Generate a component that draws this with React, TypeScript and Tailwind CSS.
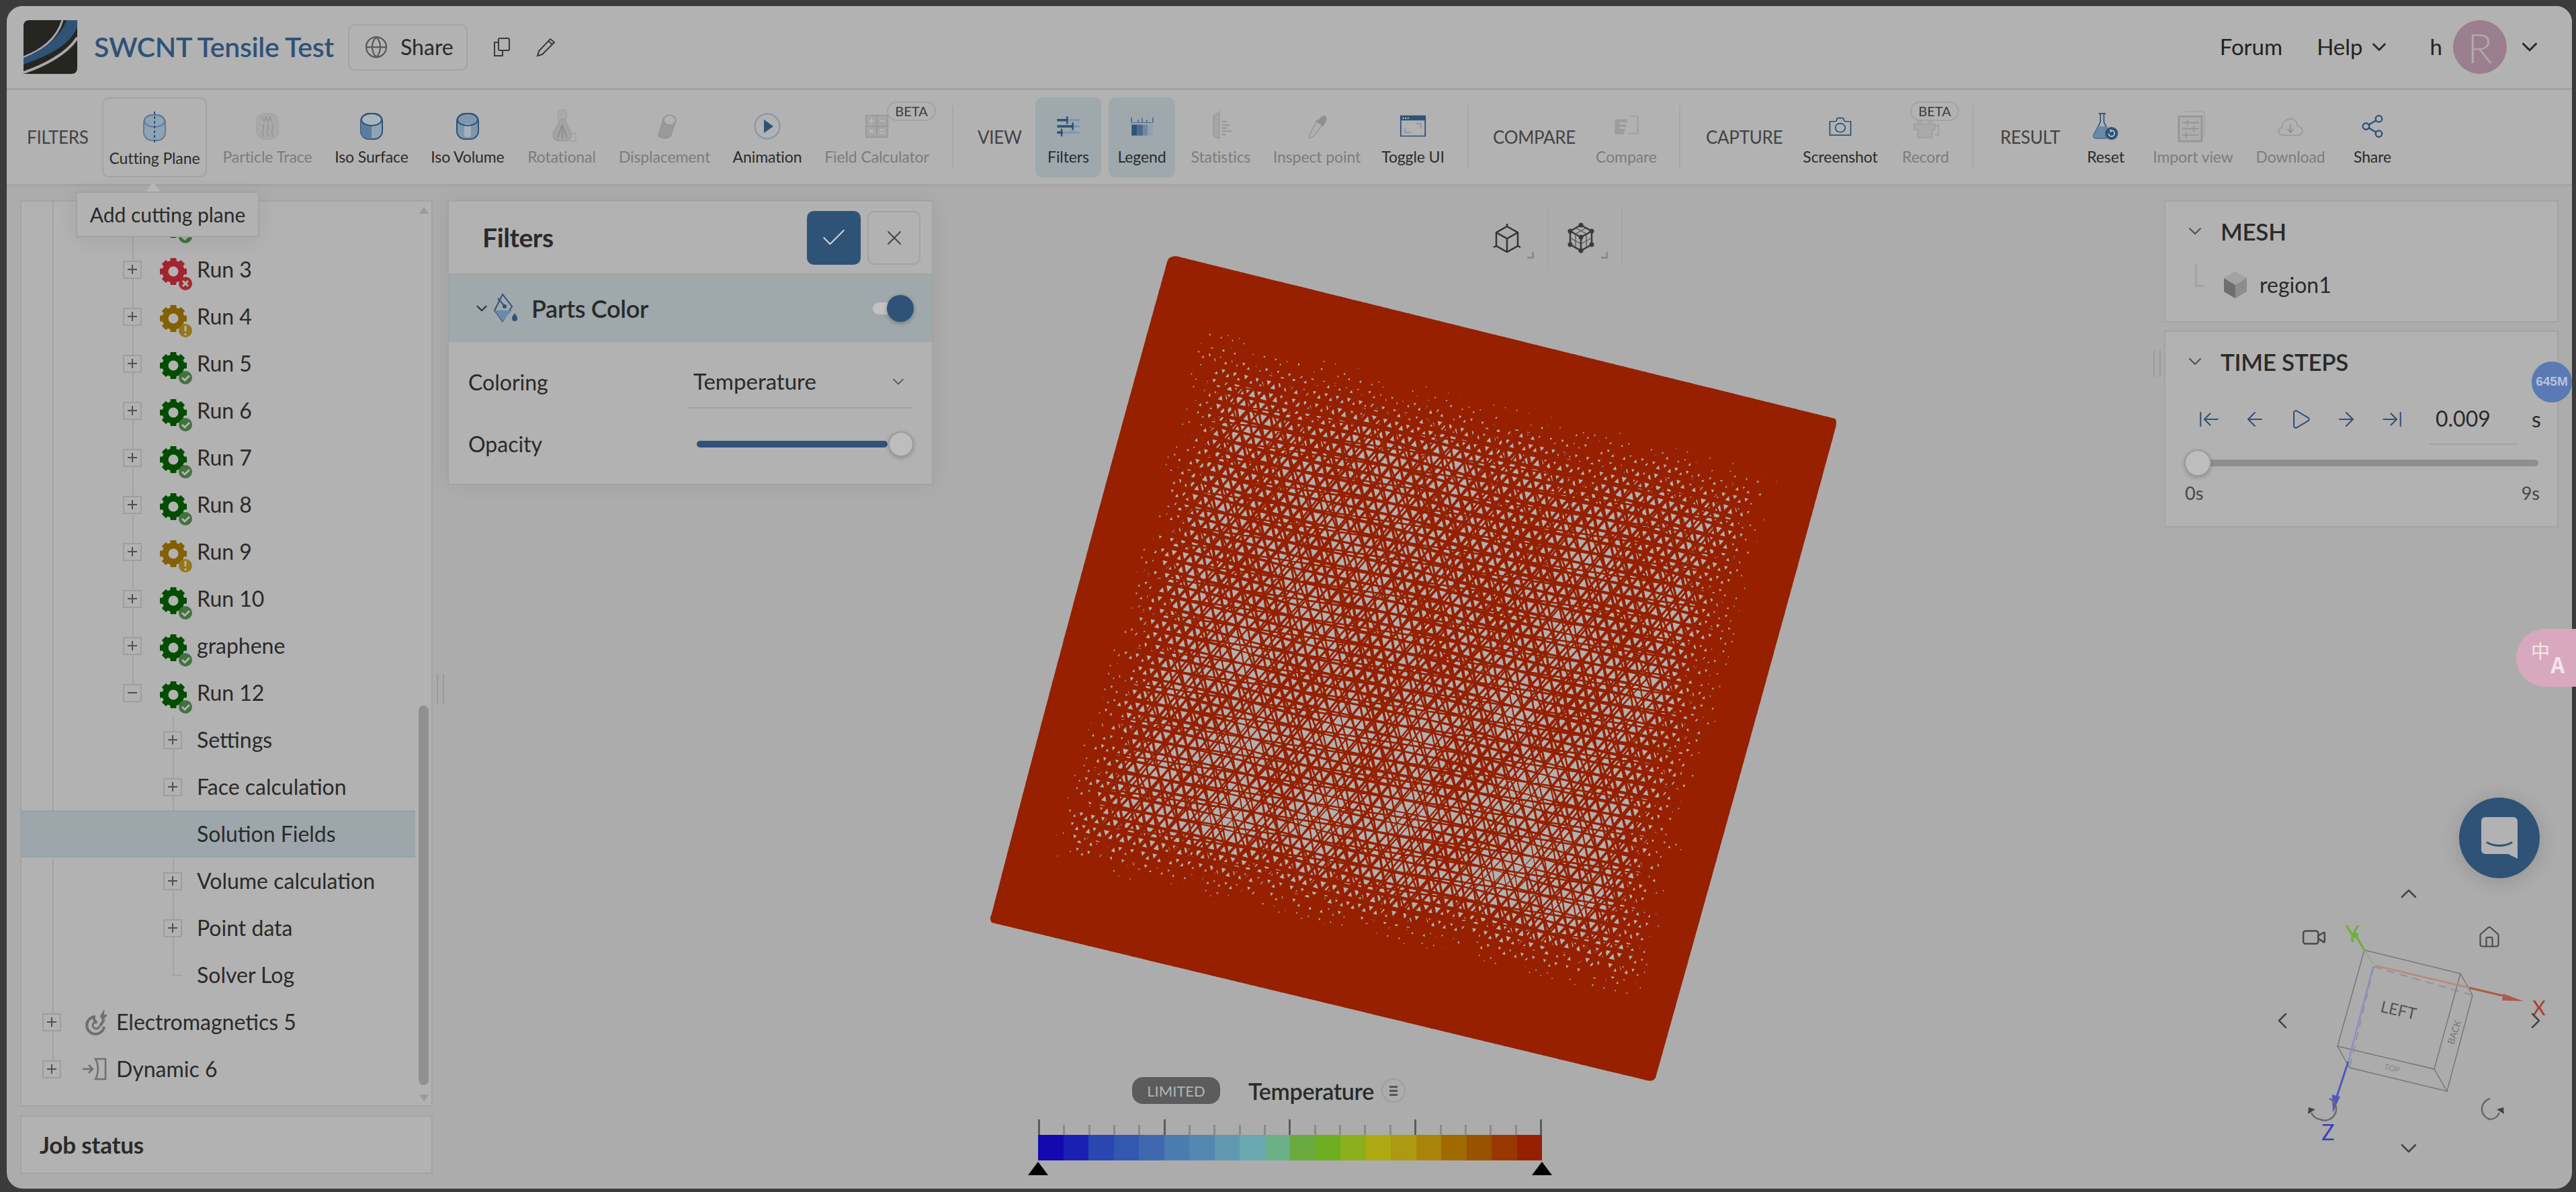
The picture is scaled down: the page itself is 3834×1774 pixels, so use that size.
import { useMemo } from "react"
import { ArrowLeft, ArrowLeftToLine, ArrowRight, ArrowRightToLine, Check, ChevronDown, ChevronLeft, ChevronRight, ChevronUp, Globe, House, Play, Share2, Video, X } from "lucide-react"

const B = "#2f5277"
const L = "#7e97ad"

// toolbar icons, drawn in their own box and stretched to the size the toolbar wants
function Cylinder({ fill, stroke, dashed, half, core }: { fill: string; stroke: string; dashed?: boolean; half?: boolean; core?: boolean }) {
  return (
    <svg width="48" height="48" viewBox="0 0 48 48" fill="none">
      <rect x="8" y="5" width="32" height="38" rx="12" fill={fill} stroke={stroke} strokeWidth="2" />
      {half && <path d="M8 15v16c0 8 6 12 16 12V15z" fill="#5b7c9c" />}
      {core && <rect x="19" y="20" width="10" height="20" rx="4" fill="#a4b1bb" />}
      <ellipse cx="24" cy="14" rx="15" ry="9" fill={half ? "#a9b5bf" : "none"} stroke={stroke} strokeWidth="2" />
      {dashed && <path d="M24 0v48" stroke={B} strokeWidth="2" strokeDasharray="4 3" />}
    </svg>
  )
}

function ParticleIcon() {
  return (
    <svg width="34" height="40" viewBox="0 0 34 40" fill="none">
      <rect x="1" y="1" width="32" height="38" rx="12" fill="#a9a9a9" stroke="#a3a3a3" strokeWidth="1.5" />
      <path d="M9 6l3 7 3-7 3 7 3-7 3 7M10 17c4 6-3 8 1 18M17 17c4 6-3 8 1 18M24 17c4 6-3 8 1 18" stroke="#939393" strokeWidth="1.5" />
    </svg>
  )
}

function RotationalIcon() {
  return (
    <svg width="52" height="49" viewBox="0 0 62 52" preserveAspectRatio="none" fill="none">
      <rect x="24" y="0" width="16" height="18" rx="8" fill="#aaaaaa" stroke="#a2a2a2" strokeWidth="2" />
      <path d="M28 16h8l12 22v4a16 8 0 0 1-32 0v-4z" fill="#a4a4a4" stroke="#9c9c9c" strokeWidth="2" />
      <path d="M32 24l-8 20M32 24v22M32 24l8 20" stroke="#8c8c8c" strokeWidth="2" />
      <path d="M50 38h6v12H22" stroke="#a4a4a4" strokeWidth="2" />
    </svg>
  )
}

function DisplacementIcon() {
  return (
    <svg width="43" height="40" viewBox="0 0 48 48" preserveAspectRatio="none" fill="none">
      <path d="M14 38L22 10c2-7 20-5 20 5L34 40c-2 8-22 6-20-2z" fill="#9a9a9a" stroke="#949494" strokeWidth="2" />
      <ellipse cx="32" cy="13" rx="10" ry="9" fill="#b2b2b2" stroke="#949494" strokeWidth="2" />
    </svg>
  )
}

function AnimationIcon() {
  return (
    <svg width="40" height="40" viewBox="0 0 40 40" fill="none">
      <circle cx="20" cy="20" r="18.5" stroke={L} strokeWidth="2" />
      <path d="M15 10l14 10-14 10z" fill={B} />
    </svg>
  )
}

function CalcIcon() {
  return (
    <svg width="36" height="36" viewBox="0 0 40 40" fill="none" stroke="#9a9a9a" strokeWidth="2">
      <rect x="2" y="2" width="36" height="36" fill="#a6a6a6" />
      <path d="M20 2v36M2 20h36" />
      <path d="M7 11h8M11 7v8M25 11h8M8 25l6 6M14 25l-6 6M25 26h8M25 31h8" stroke="#bbbbbb" />
    </svg>
  )
}

function FiltersIcon() {
  return (
    <svg width="40" height="34" viewBox="0 0 48 48" preserveAspectRatio="none" fill="none">
      <path d="M4 11h40" stroke={L} strokeWidth="5" /><path d="M4 11h18" stroke={B} strokeWidth="5" /><path d="M22 3v16" stroke={B} strokeWidth="3" />
      <path d="M4 24h40" stroke={L} strokeWidth="5" /><path d="M4 24h28" stroke={B} strokeWidth="5" /><path d="M32 16v16" stroke={B} strokeWidth="3" />
      <path d="M4 37h40" stroke={L} strokeWidth="5" /><path d="M4 37h10" stroke={B} strokeWidth="5" /><path d="M12 29v16" stroke={B} strokeWidth="3" />
    </svg>
  )
}

function LegendIcon() {
  return (
    <svg width="40" height="30" viewBox="0 0 48 48" preserveAspectRatio="none" fill="none">
      <path d="M5 3v11M17 8v6M24 4v10M32 8v6M43 3v11M4 15h40" stroke={B} strokeWidth="1.5" />
      <rect x="5" y="20" width="10" height="26" fill={B} />
      <rect x="15" y="20" width="10" height="26" fill="#49698a" />
      <rect x="25" y="20" width="9" height="26" fill="#6d889f" />
      <rect x="34" y="20" width="9" height="26" fill="#8ea1af" />
    </svg>
  )
}

function StatisticsIcon() {
  return (
    <svg width="40" height="46" viewBox="0 0 54 52" preserveAspectRatio="none" fill="none">
      <path d="M24 4C12 4 12 10 12 14v24c0 4 2 8 12 8z" fill="#a5a5a5" stroke="#9c9c9c" strokeWidth="2" />
      <path d="M24 0v52" stroke="#9c9c9c" strokeWidth="2" strokeDasharray="4 3" />
      <path d="M29 18h10M29 24h16M29 29h10M29 34h20M29 40h8" stroke="#9c9c9c" strokeWidth="3" />
    </svg>
  )
}

function DropperIcon() {
  return (
    <svg width="38" height="38" viewBox="0 0 48 48" fill="none">
      <path d="M24 14l10 8-17 22-7 2 1-8z" fill="#b0b0b0" stroke="#9a9a9a" strokeWidth="2" />
      <path d="M22 14l14 10 3-6c6-7 3-16-3-14-3 1-5 3-7 6z" fill="#8f8f8f" />
    </svg>
  )
}

function ToggleIcon() {
  return (
    <svg width="40" height="33" viewBox="0 0 44 44" preserveAspectRatio="none" fill="none">
      <rect x="2" y="2" width="40" height="40" stroke={B} strokeWidth="2" />
      <rect x="2" y="2" width="40" height="9" fill={B} />
      <path d="M6 5v3M10 5v3M14 5v3" stroke="#c8c8c8" strokeWidth="2" />
      <path d="M26 17h9v10M9 26v9h10" stroke={L} strokeWidth="2" />
    </svg>
  )
}

function CompareIcon() {
  return (
    <svg width="41" height="36" viewBox="0 0 48 48" preserveAspectRatio="none" fill="none">
      <path d="M4 10h22l-6 30H4z" fill="#9c9c9c" />
      <path d="M30 4h14v34H28" stroke="#9c9c9c" strokeWidth="2" />
      <path d="M12 18h12M12 27h10" stroke="#b8b8b8" strokeWidth="3" />
    </svg>
  )
}

function CameraIcon() {
  return (
    <svg width="36" height="32" viewBox="0 0 44 44" preserveAspectRatio="none" fill="none" stroke={B} strokeWidth="2.2">
      <path d="M3 12h11l3-7h10l3 7h11v28H3z" strokeLinejoin="round" />
      <circle cx="22" cy="25" r="9" />
    </svg>
  )
}

function RecordIcon() {
  return (
    <svg width="42" height="40" viewBox="0 0 44 48" preserveAspectRatio="none" fill="none" stroke="#9e9e9e" strokeWidth="2">
      <circle cx="13" cy="10" r="6" /><circle cx="29" cy="10" r="6" />
      <path d="M4 20h32v10h-4v14H10V30H4z" fill="#aaaaaa" />
      <path d="M36 24l6-2v18l-6-2" />
    </svg>
  )
}

function ResetIcon() {
  return (
    <svg width="42" height="42" viewBox="0 0 48 48" fill="none">
      <path d="M12 2h12M15 2v15L4 38c-2 4 0 6 4 6h18" stroke={B} strokeWidth="2" />
      <path d="M21 2v15l6 12" stroke={B} strokeWidth="2" />
      <path d="M11 24h16l4 14-5 6H8c-4 0-6-2-4-6z" fill="#6a8aa8" />
      <circle cx="34" cy="36" r="11" fill={B} />
      <path d="M34 31a5 5 0 1 1-5 5M31 30l3 1-2 3" stroke="#c0c8d0" strokeWidth="2" />
    </svg>
  )
}

function ImportIcon() {
  return (
    <svg width="48" height="48" viewBox="0 0 52 52" fill="none">
      <path d="M12 2h32v40H38" stroke="#a6a6a6" strokeWidth="2" />
      <rect x="3" y="10" width="37" height="40" stroke="#969696" strokeWidth="3" fill="#adadad" />
      <path d="M9 20h26M9 30h26M9 40h26M17 15v10M27 25v10M15 35v10" stroke="#949494" strokeWidth="2" />
    </svg>
  )
}

function DownloadIcon() {
  return (
    <svg width="42" height="30" viewBox="0 0 48 36" preserveAspectRatio="none" fill="none" stroke="#9a9a9a" strokeWidth="2">
      <path d="M12 34C2 34 1 22 10 20 9 12 16 6 24 4c8 1 12 8 12 14 10 0 12 16 1 16z" />
      <path d="M24 14v14M19 23l5 6 5-6" stroke="#8e8e8e" />
    </svg>
  )
}

function GearBadge({ state }: { state: "ok" | "warn" | "fail" }) {
  const gear = state === "ok" ? "#034d02" : state === "warn" ? "#836004" : "#a3242f"
  const badge = state === "ok" ? "#427240" : state === "warn" ? "#94791b" : "#a02c2c"
  return (
    <svg width="55" height="50" viewBox="0 0 55 50" className="mt-[16px] shrink-0">
      <circle cx="20" cy="20" r="12" fill="none" stroke={gear} strokeWidth="9" />
      {[0, 45, 90, 135, 180, 225, 270, 315].map((a) => (
        <rect key={a} x="15.5" y="0" width="9" height="9" rx="1" fill={gear} transform={`rotate(${a} 20 20)`} />
      ))}
      <circle cx="38" cy="38" r="10" fill={badge} />
      {state === "ok" && <path d="M33 38l4 4 7-7" fill="none" stroke="#b2b2b2" strokeWidth="3" />}
      {state === "warn" && <path d="M38 31v8M38 42v3" fill="none" stroke="#b2b2b2" strokeWidth="3" />}
      {state === "fail" && <path d="M34 34l8 8M42 34l-8 8" fill="none" stroke="#b2b2b2" strokeWidth="3" />}
    </svg>
  )
}

function MagnetIcon() {
  return (
    <svg width="51" height="40" viewBox="0 0 51 40" fill="none" stroke="#6f6f6f" className="shrink-0">
      <path d="M20 12a13 13 0 1 0 13 15" strokeWidth="4" />
      <path d="M22 20a5 5 0 1 0 4 6" strokeWidth="3" />
      <path d="M16 13l6 9M33 16l-6 10" strokeWidth="4" />
      <path d="M27 12l6-10-1 8 5-1-6 9" fill="#6f6f6f" strokeWidth="1" />
    </svg>
  )
}

function DynamicIcon() {
  return (
    <svg width="51" height="34" viewBox="0 0 51 34" fill="none" stroke="#6f6f6f" strokeWidth="2.5" className="shrink-0">
      <path d="M1 17h15M10 11l6 6-6 6" />
      <path d="M20 2h15v30H20c5-8 5-22 0-30z" />
    </svg>
  )
}

type ToolProps = { label: string; w: string; icon: React.ReactNode; off?: boolean; on?: boolean; outline?: boolean; beta?: string }

function Tool({ label, w, icon, off, on, outline, beta }: ToolProps) {
  return (
    <div className={`relative flex h-[119px] shrink-0 flex-col items-center rounded-[10px] ${w} ${on ? "bg-[#9ea8ad]" : ""} ${outline ? "border-2 border-[#a3a3a3]" : ""}`}>
      <div className="flex h-[74px] items-center justify-center pt-[12px]">{icon}</div>
      <span className={`text-[23px] leading-[28px] whitespace-nowrap tracking-[-0.1px] ${off ? "text-[#7c7c7c]" : "text-[#2b2b2b]"}`}>{label}</span>
      {beta && <span className={`absolute top-[6px] flex h-[29px] w-[73px] items-center justify-center rounded-full border-2 border-[#a3a3a3] bg-[#b2b2b2] text-[20px] text-[#3d3d3d] ${beta}`}>BETA</span>}
    </div>
  )
}

function GroupLabel({ children, className }: { children: string; className: string }) {
  return <span className={`shrink-0 text-[26px] tracking-[-0.3px] text-[#434343] whitespace-nowrap ${className}`}>{children}</span>
}

function Divider({ className }: { className: string }) {
  return <div className={`h-[95px] w-[2px] shrink-0 bg-[#a8a8a8] ${className}`} />
}

function Expander({ open }: { open?: boolean }) {
  return (
    <div className="relative z-10 flex h-[27px] w-[28px] shrink-0 items-center justify-center border-2 border-[#9e9e9e] bg-[#b2b2b2]">
      <svg width="14" height="14" viewBox="0 0 14 14" stroke="#505050" strokeWidth="2">
        <path d="M0 7h14" />
        {!open && <path d="M7 0v14" />}
      </svg>
    </div>
  )
}

// the first row sits behind the tooltip, only its badge peeks out
const runs: { label: string; state: "ok" | "warn" | "fail"; open?: boolean }[] = [
  { label: "", state: "ok" },
  { label: "Run 3", state: "fail" },
  { label: "Run 4", state: "warn" },
  { label: "Run 5", state: "ok" },
  { label: "Run 6", state: "ok" },
  { label: "Run 7", state: "ok" },
  { label: "Run 8", state: "ok" },
  { label: "Run 9", state: "warn" },
  { label: "Run 10", state: "ok" },
  { label: "graphene", state: "ok" },
  { label: "Run 12", state: "ok", open: true },
]

const children = [
  { label: "Settings", plus: true },
  { label: "Face calculation", plus: true },
  { label: "Solution Fields", selected: true },
  { label: "Volume calculation", plus: true },
  { label: "Point data", plus: true },
  { label: "Solver Log", last: true },
]

const legendColors = ["#1408b0", "#1a20b2", "#2a46b0", "#3258b0", "#4068ae", "#4a7cb0", "#5488b0", "#5f98af", "#68a8b0", "#6cb088", "#6aab40", "#6fae20", "#8caf1e", "#adaa14", "#ad9a10", "#a88408", "#a06a00", "#985200", "#983800", "#952000"]

function TreePanel() {
  const guide = "absolute w-[2px] bg-[#a3a3a3]"
  return (
    <div className="relative h-[1349px] overflow-hidden border-2 border-[#a3a3a3] bg-[#b2b2b2]">
      <div className="-mt-[4px] w-[586px] text-[32px] text-[#2a2a2a]">
        {runs.map((r) => (
          <div key={r.label} className="relative flex h-[70px] items-center pl-[151px]">
            <div className={`${guide} left-[46px] top-0 bottom-0`} />
            <div className={`${guide} left-[165px] top-0 ${r.open ? "h-[35px]" : "bottom-0"}`} />
            <Expander open={r.open} />
            <div className="ml-[27px] flex items-center"><GearBadge state={r.state} /></div>
            <span>{r.label}</span>
          </div>
        ))}
        {children.map((c) => (
          <div key={c.label} className={`relative flex h-[70px] items-center pl-[211px] ${c.selected ? "bg-[#9da6aa]" : ""}`}>
            {c.selected && <div className="absolute inset-x-0 top-0 bottom-0 border-y-2 border-[#94a1aa]" />}
            <div className={`${guide} left-[46px] top-0 bottom-0`} />
            <div className={`${guide} left-[225px] top-0 ${c.last ? "h-[36px]" : "bottom-0"}`} />
            {c.plus ? <Expander /> : <div className="relative z-10 mt-[1px] ml-[14px] h-[2px] w-[14px] bg-[#a3a3a3]" />}
            <span className="absolute left-[261px]">{c.label}</span>
          </div>
        ))}
        <div className="relative flex h-[70px] items-center pl-[31px]">
          <div className={`${guide} left-[46px] top-0 bottom-0`} />
          <Expander />
          <div className="ml-[31px] flex items-center"><MagnetIcon /></div>
          <span>Electromagnetics 5</span>
        </div>
        <div className="relative flex h-[70px] items-center pl-[31px]">
          <div className={`${guide} left-[46px] top-0 h-[35px]`} />
          <Expander />
          <div className="ml-[31px] flex items-center"><DynamicIcon /></div>
          <span>Dynamic 6</span>
        </div>
      </div>
      <div className="absolute top-[8px] right-[4px] flex h-[1331px] w-[15px] flex-col items-center justify-between">
        <div className="h-0 w-0 border-x-[7px] border-b-[10px] border-x-transparent border-b-[#9a9a9a]" />
        <div className="absolute top-[742px] h-[565px] w-[15px] rounded-full bg-[#919191]" />
        <div className="h-0 w-0 border-x-[7px] border-t-[10px] border-x-transparent border-t-[#9a9a9a]" />
      </div>
    </div>
  )
}

function FiltersPanel() {
  return (
    <div className="ml-[22px] h-[424px] w-[723px] shrink-0 border-2 border-[#a3a3a3] bg-[#b2b2b2] shadow-[0_0_30px_rgba(0,0,0,0.06)]">
      <div className="flex h-[109px] items-center justify-between border-b-2 border-[#a3a3a3] pr-[17px] pl-[50px]">
        <span className="text-[39px] font-bold tracking-[-0.4px] text-[#2a2a2a]">Filters</span>
        <div className="flex gap-[10px]">
          <div className="flex h-[80px] w-[80px] items-center justify-center rounded-[10px] bg-[#2f5277]"><Check size={44} color="#c9d1d9" strokeWidth={1.2} /></div>
          <div className="flex h-[80px] w-[79px] items-center justify-center rounded-[10px] border-2 border-[#a3a3a3]"><X size={36} color="#444444" strokeWidth={1.3} /></div>
        </div>
      </div>
      <div className="flex h-[100px] items-center bg-[#9fa8ab] pr-[46px] pl-[36px]">
        <ChevronDown size={26} color="#333333" strokeWidth={2} />
        <svg width="36" height="46" viewBox="0 0 36 46" fill="none" className="ml-[4px]">
          <path d="M14 2l14 18-14 22L2 26z" stroke={B} strokeWidth="2" />
          <path d="M2 26h26L14 42z" fill="#6a8aa8" />
          <path d="M7 8l12 14" stroke={B} strokeWidth="2" /><circle cx="17" cy="20" r="3" fill={B} />
          <path d="M32 30c3 4 4 6 4 8a4 4 0 0 1-8 0c0-2 1-4 4-8z" fill={B} />
        </svg>
        <span className="ml-[21px] text-[36px] font-semibold tracking-[-0.3px] text-[#2a2a2a]">Parts Color</span>
        <div className="relative ml-auto h-[18px] w-[42px] rounded-full bg-[#c2c2c2]">
          <div className="absolute -top-[11px] -right-[19px] h-[40px] w-[40px] rounded-full bg-[#2f5277] shadow-[0_2px_6px_rgba(0,0,0,0.3)]" />
        </div>
      </div>
      <div className="flex h-[100px] items-center pr-[29px] pl-[29px] text-[32px] text-[#2a2a2a]">
        <span className="mt-[20px] w-[326px]">Coloring</span>
        <div className="mt-[20px] flex h-[78px] w-[337px] items-center justify-between border-b-2 border-[#a3a3a3] pr-[7px] pl-[10px]">
          <span className="text-[33px]">Temperature</span>
          <ChevronDown size={28} color="#4a4a4a" strokeWidth={1.5} />
        </div>
      </div>
      <div className="mt-[28px] flex items-center pl-[29px] text-[32px] text-[#2a2a2a]">
        <span className="w-[340px]">Opacity</span>
        <div className="relative h-[10px] w-[284px] rounded-full bg-[#2f5277]">
          <div className="absolute -top-[14px] -right-[39px] h-[38px] w-[38px] rounded-full border-2 border-[#9a9a9a] bg-[#bdbdbd] shadow-[0_2px_6px_rgba(0,0,0,0.2)]" />
        </div>
      </div>
    </div>
  )
}

function RightPanels() {
  const head = "flex items-center gap-[22px] pl-[28px] text-[35px] font-semibold text-[#2a2a2a] tracking-[-0.3px]"
  const step = { size: 34, color: B, strokeWidth: 1.5 }
  return (
    <div className="mr-[20px] ml-auto flex w-[587px] shrink-0 flex-col gap-[12px]">
      <div className="h-[182px] border-2 border-[#a3a3a3] bg-[#b2b2b2] pt-[18px]">
        <div className={head}><ChevronDown size={32} color="#4e4e4e" strokeWidth={1.5} />MESH</div>
        <div className="relative mt-[28px] flex h-[50px] items-center pl-[86px]">
          <div className="absolute top-[-6px] left-[44px] h-[34px] w-[14px] border-b-[3px] border-l-[3px] border-[#a4a4a4]" />
          <svg width="36" height="42" viewBox="0 0 36 42">
            <path d="M18 1l17 10v20L18 41 1 31V11z" fill="#8d8d8d" />
            <path d="M1 11l17 10v20L1 31z" fill="#6f6f6f" />
            <path d="M18 1l17 10-17 10L1 11z" fill="#a3a3a3" />
          </svg>
          <span className="ml-[18px] text-[32px] text-[#2a2a2a]">region1</span>
        </div>
      </div>
      <div className="h-[293px] border-2 border-[#a3a3a3] bg-[#b2b2b2] pt-[18px]">
        <div className={head}><ChevronDown size={32} color="#4e4e4e" strokeWidth={1.5} />TIME STEPS</div>
        <div className="mt-[29px] flex h-[60px] items-center pl-[48px] text-[#2a2a2a]">
          <ArrowLeftToLine {...step} className="mr-[34px]" />
          <ArrowLeft {...step} className="mr-[34px]" />
          <Play {...step} className="mr-[34px]" />
          <ArrowRight {...step} className="mr-[34px]" />
          <ArrowRightToLine {...step} />
          <div className="ml-[39px] flex h-[76px] w-[132px] shrink-0 items-center border-b-2 border-[#a3a3a3] pl-[9px] text-[32px]">0.009</div>
          <span className="ml-[20px] text-[32px]">s</span>
        </div>
        <div className="relative mt-[30px] ml-[48px] h-[10px] w-[507px] rounded-full bg-[#8f8f8f]">
          <div className="absolute -top-[15px] -left-[20px] h-[40px] w-[40px] rounded-full border-2 border-[#9a9a9a] bg-[#bdbdbd] shadow-[0_2px_6px_rgba(0,0,0,0.2)]" />
        </div>
        <div className="mt-[20px] flex w-[557px] justify-between pl-[29px] text-[27px] text-[#474747]">
          <span>0s</span><span>9s</span>
        </div>
      </div>
    </div>
  )
}

// the perforated sheet: a warped triangle lattice, with the holes shrinking towards the border
function buildHoles() {
  const tl = [1750, 381], tr = [2731, 623], br = [2460, 1606], bl = [1476, 1372]
  const at = (u: number, v: number) => [
    tl[0] * (1 - u) * (1 - v) + tr[0] * u * (1 - v) + br[0] * u * v + bl[0] * (1 - u) * v,
    tl[1] * (1 - u) * (1 - v) + tr[1] * u * (1 - v) + br[1] * u * v + bl[1] * (1 - u) * v,
  ]
  let seed = 7
  const rnd = () => {
    seed = (seed * 16807) % 2147483647
    return seed / 2147483647
  }
  const n = 58
  let d = ""
  const tri = (a: number[], b: number[], c: number[]) => {
    const u = (a[0] + b[0] + c[0]) / 3
    const v = (a[1] + b[1] + c[1]) / 3
    const edge = Math.min(u - 0.04, 0.97 - u, v - 0.07, 0.91 - v)
    if (edge <= 0) return
    const fade = Math.min(1, edge / 0.12)
    const wave = Math.sin(u * 31 + Math.sin(v * 9) * 3) * Math.sin(v * 27 + Math.sin(u * 7) * 3)
    const s = fade * (0.44 + 0.3 * v + 0.12 * wave + 0.12 * rnd())
    if (s < 0.12 || rnd() > fade + 0.4) return
    const pts = [a, b, c].map((p) => {
      const w = at(u + (p[0] - u) * s, v + (p[1] - v) * s)
      return `${w[0].toFixed(1)} ${w[1].toFixed(1)}`
    })
    d += `M${pts[0]}L${pts[1]}L${pts[2]}z`
  }
  const node = (i: number, j: number) => [
    (i + j / 2) / n + Math.sin(j * 0.35) * 0.002,
    j / n + Math.sin(i * 0.3) * 0.002,
  ]
  for (let j = 0; j < n; j++) {
    for (let i = -n; i < n; i++) {
      const a = node(i, j), b = node(i + 1, j), c = node(i, j + 1), e = node(i + 1, j + 1)
      tri(a, b, c)
      tri(b, e, c)
    }
  }
  return d
}

// a second set of red struts at other angles cuts the holes up into uneven slivers
function buildStruts() {
  let d = ""
  for (const deg of [9, 69, 129]) {
    const r = (deg * Math.PI) / 180
    const dx = Math.cos(r), dy = Math.sin(r)
    for (let k = -50; k <= 50; k++) {
      const off = k * 27
      const cx = 2100 - dy * off, cy = 1000 + dx * off
      d += `M${(cx - dx * 900).toFixed(1)} ${(cy - dy * 900).toFixed(1)}L${(cx + dx * 900).toFixed(1)} ${(cy + dy * 900).toFixed(1)}`
    }
  }
  return d
}

const sheet = "M1740 384Q1748 379 1758 383L2731 623Q2735 626 2731 640Q2600 1120 2464 1604Q2460 1610 2452 1608L1476 1373Q1472 1368 1476 1360Q1600 880 1736 394Q1737 388 1740 384z"

function MeshView() {
  const holes = useMemo(buildHoles, [])
  const struts = useMemo(buildStruts, [])
  return (
    <svg width="1400" height="1300" viewBox="1400 340 1400 1300" className="absolute top-[63px] left-[1390px]">
      <defs><clipPath id="sheet"><path d={sheet} /></clipPath></defs>
      <path d={sheet} fill="#962000" />
      <path d={holes} fill="#b0b0b0" />
      <path d={struts} stroke="#962000" strokeWidth="2.8" clipPath="url(#sheet)" />
    </svg>
  )
}

function ViewCubes() {
  const mark = "absolute top-[92px] h-[10px] w-[10px] border-r-[3px] border-b-[3px] border-[#8a8a8a]"
  return (
    <div className="absolute top-[50px] left-[2205px] flex items-center gap-[54px] text-[#333333]">
      <svg width="56" height="56" viewBox="0 0 56 56" fill="none" stroke="#333333" strokeWidth="2.5">
        <path d="M28 10l16 9v20l-16 9-16-9V19zM12 19l16 9 16-9M28 28v20M28 6v4M12 39l-4 2M44 39l4 2" />
      </svg>
      <svg width="56" height="56" viewBox="0 0 56 56" fill="none" stroke="#3a3a3a" strokeWidth="2">
        <path d="M28 8l16 9v20l-16 9-16-9V17zM12 17l16 9 16-9M28 26v20" strokeWidth="2.5" />
        <path d="M20 12l16 9M36 12l-16 9M20 21v20M36 21v20M12 27l16 9 16-9" strokeWidth="1" />
        {[[28, 8], [44, 17], [44, 37], [28, 46], [12, 37], [12, 17], [28, 26]].map(([x, y]) => <circle key={`${x}-${y}`} cx={x} cy={y} r="3.5" fill="#3a3a3a" stroke="none" />)}
      </svg>
      <i className="absolute top-[-20px] left-[88px] h-[90px] w-[2px] bg-[#a6a6a6]" />
      <i className="absolute top-[-20px] left-[198px] h-[90px] w-[2px] bg-[#a6a6a6]" />
      <i className={`${mark} left-[58px] -mt-[44px]`} />
      <i className={`${mark} left-[168px] -mt-[44px]`} />
    </div>
  )
}

function Legend() {
  return (
    <div className="absolute top-[1326px] left-[1535px] w-[750px]">
      <div className="flex h-[40px] items-center">
        <span className="ml-[140px] flex h-[40px] w-[131px] items-center justify-center rounded-[16px] bg-[#5c5c5c] text-[22px] text-[#b4b4b4]">LIMITED</span>
        <span className="ml-[42px] text-[34px] font-semibold tracking-[-0.3px] text-[#2a2a2a]">Temperature</span>
        <span className="ml-[11px] flex h-[36px] w-[36px] flex-col items-center justify-center gap-[3px] rounded-full border-2 border-[#9e9e9e]">
          <i className="h-[3px] w-[12px] bg-[#555555]" /><i className="h-[3px] w-[12px] bg-[#555555]" /><i className="h-[3px] w-[12px] bg-[#555555]" />
        </span>
      </div>
      <div className="mt-[23px] flex h-[23px] items-end justify-between">
        {Array.from({ length: 21 }, (_, i) => (
          <div key={i} className={i % 5 === 0 ? "h-[23px] w-[3px] bg-[#5c5c5c]" : "h-[15px] w-[3px] bg-[#8a8a8a]"} />
        ))}
      </div>
      <div className="flex h-[38px]">
        {legendColors.map((c) => <div key={c} className="flex-1" style={{ backgroundColor: c }} />)}
      </div>
      <div className="-mx-[15px] mt-[2px] flex justify-between">
        <div className="h-0 w-0 border-x-[15px] border-b-[20px] border-x-transparent border-b-black" />
        <div className="h-0 w-0 border-x-[15px] border-b-[20px] border-x-transparent border-b-black" />
      </div>
    </div>
  )
}

function OrientationGizmo() {
  return (
    <svg width="494" height="624" viewBox="0 0 494 624" fill="none" className="absolute top-[873px] left-[3330px]">
      <path d="M179 264L322 299 283 441 139 407zM322 299l18 32-38 143-19-33M139 407l18 32 145 35" stroke="#777777" strokeWidth="1.5" />
      <path d="M193 289L340 331M193 289L157 439" stroke="#8c8c8c" strokeWidth="1.5" strokeDasharray="12 8" />
      <path d="M179 264L192 285" stroke="#8fb07a" strokeWidth="2" />
      <path d="M179 264L166 242" stroke="#6cb03a" strokeWidth="3" />
      <circle cx="166" cy="242" r="4" fill="#6cb03a" />
      <path d="M195 287L335 320" stroke="#b98680" strokeWidth="2.5" />
      <path d="M335 320L390 333" stroke="#b0584c" strokeWidth="3" />
      <path d="M386 329l30 11-32-1z" fill="#b0584c" />
      <path d="M192 289L155 430" stroke="#8a8ec4" strokeWidth="2.5" />
      <path d="M155 430L137 485" stroke="#5158c0" strokeWidth="3" />
      <path d="M131 479l12 3-11 24z" fill="#5158c0" />
      <text x="161" y="252" textAnchor="middle" fontSize="34" fill="#6cb03a">Y</text>
      <text x="439" y="361" textAnchor="middle" fontSize="30" fill="#ab3a30">X</text>
      <text x="125" y="547" textAnchor="middle" fontSize="32" fill="#3d3ec0">Z</text>
      <text x="230" y="362" textAnchor="middle" fontSize="24" fill="#555555" transform="rotate(13 230 353)">LEFT</text>
      <text x="312" y="392" textAnchor="middle" fontSize="14" fill="#777777" transform="rotate(-72 312 386)">BACK</text>
      <text x="220" y="444" textAnchor="middle" fontSize="12" fill="#888888" transform="rotate(13 220 440)">TOP</text>
      <foreignObject x="225" y="160" width="40" height="40"><ChevronUp size={40} color="#444444" strokeWidth={1.5} /></foreignObject>
      <foreignObject x="225" y="539" width="40" height="40"><ChevronDown size={40} color="#444444" strokeWidth={1.5} /></foreignObject>
      <foreignObject x="37" y="349" width="40" height="40"><ChevronLeft size={40} color="#444444" strokeWidth={1.5} /></foreignObject>
      <foreignObject x="414" y="349" width="40" height="40"><ChevronRight size={40} color="#444444" strokeWidth={1.5} /></foreignObject>
      <foreignObject x="85" y="226" width="40" height="40"><Video size={38} color="#4a4a4a" strokeWidth={1.6} /></foreignObject>
      <foreignObject x="347" y="227" width="40" height="40"><House size={36} color="#4a4a4a" strokeWidth={1.4} /></foreignObject>
      <path d="M127 485a16 16 0 0 1-14 31 18 18 0 0 1-13-10" stroke="#6a6a6a" strokeWidth="2.5" />
      <path d="M96 498l10 3-11 7z" fill="#444444" />
      <path d="M366 485a16 16 0 0 0 0 31 16 16 0 0 0 14-10" stroke="#6a6a6a" strokeWidth="2.5" />
      <path d="M386 498l-10 3 11 7z" fill="#444444" />
    </svg>
  )
}

export default function App() {
  return (
    <div className="relative h-[1774px] w-[3834px] overflow-hidden bg-[#3b3b3b] pt-[9px] pr-[6px] pb-[5px] pl-[10px] [font-family:Lato,sans-serif]">
      <div className="relative flex h-full flex-col overflow-hidden rounded-[24px] bg-[#acacac]">
        <header className="flex h-[125px] shrink-0 items-center border-b-[3px] border-[#a3a3a3] bg-[#b2b2b2] pr-[44px] pl-[25px]">
          <svg width="80" height="80" viewBox="0 0 80 80" className="shrink-0">
            <path d="M8 0H80V72a8 8 0 0 1-8 8H0V8a8 8 0 0 1 8-8z" fill="#262522" />
            <path d="M58 0C50 28 25 46 0 55" fill="none" stroke="#a9a9a9" strokeWidth="3" />
            <path d="M64 0H80V10C70 36 40 52 0 66V56C30 44 54 26 64 0z" fill="#2f5277" />
            <path d="M0 78C30 68 65 50 80 26" fill="none" stroke="#a9a9a9" strokeWidth="4" />
          </svg>
          <span className="ml-[25px] text-[41px] font-semibold tracking-[-0.3px] text-[#2f5277]">SWCNT Tensile Test</span>
          <div className="ml-[21px] flex h-[69px] w-[178px] items-center gap-[18px] rounded-[10px] border-2 border-[#a3a3a3] pl-[22px] text-[32px] text-[#2a2a2a]">
            <Globe size={36} color="#5a5a5a" strokeWidth={1.5} />Share
          </div>
          <svg width="30" height="30" viewBox="0 0 30 30" fill="none" stroke="#3a3a3a" strokeWidth="2" className="ml-[36px]">
            <rect x="10" y="2" width="16" height="18" rx="2" /><path d="M10 8H4v20h12v-8" />
          </svg>
          <svg width="30" height="30" viewBox="0 0 30 30" fill="none" stroke="#3a3a3a" strokeWidth="2" className="ml-[35px]">
            <path d="M22 3l6 5L10 26l-7 2 2-7zM19 6l6 5" />
          </svg>
          <span className="ml-auto text-[33px] text-[#232323]">Forum</span>
          <span className="ml-[51px] text-[33px] text-[#232323]">Help</span>
          <ChevronDown size={34} color="#2a2a2a" strokeWidth={2} className="ml-[7px]" />
          <span className="ml-[59px] text-[33px] text-[#232323]">h</span>
          <span className="ml-[16px] flex h-[80px] w-[80px] items-center justify-center rounded-full bg-[#9b7f8c] text-[62px] font-light text-[#b2a8ab]">R</span>
          <ChevronDown size={38} color="#2a2a2a" strokeWidth={2} className="ml-[15px]" />
        </header>

        <div className="flex h-[143px] shrink-0 items-center border-b-[3px] border-[#a3a3a3] bg-[#b2b2b2] pl-[30px]">
          <GroupLabel className="w-[112px]">FILTERS</GroupLabel>
          <Tool label="Cutting Plane" w="w-[156px]" outline icon={<Cylinder fill="#8fa3b3" stroke="#5d7d9c" dashed />} />
          <Tool label="Particle Trace" w="w-[180px]" off icon={<ParticleIcon />} />
          <Tool label="Iso Surface" w="w-[130px]" icon={<Cylinder fill="#8fa3b3" stroke={B} half />} />
          <Tool label="Iso Volume" w="w-[156px]" icon={<Cylinder fill="#7f97ad" stroke={B} core />} />
          <Tool label="Rotational" w="w-[124px]" off icon={<RotationalIcon />} />
          <Tool label="Displacement" w="w-[182px]" off icon={<DisplacementIcon />} />
          <Tool label="Animation" w="w-[124px]" icon={<AnimationIcon />} />
          <Tool label="Field Calculator" w="w-[202px]" off beta="right-[13px]" icon={<CalcIcon />} />
          <Divider className="ml-[11px]" />
          <GroupLabel className="ml-[36px] w-[86px]">VIEW</GroupLabel>
          <Tool label="Filters" w="w-[98px]" on icon={<FiltersIcon />} />
          <Tool label="Legend" w="ml-[11px] w-[99px]" on icon={<LegendIcon />} />
          <Tool label="Statistics" w="w-[136px]" off icon={<StatisticsIcon />} />
          <Tool label="Inspect point" w="w-[150px]" off icon={<DropperIcon />} />
          <Tool label="Toggle UI" w="w-[136px]" icon={<ToggleIcon />} />
          <Divider className="ml-[13px]" />
          <GroupLabel className="ml-[36px] w-[120px]">COMPARE</GroupLabel>
          <Tool label="Compare" w="w-[157px]" off icon={<CompareIcon />} />
          <Divider className="" />
          <GroupLabel className="ml-[38px] w-[112px]">CAPTURE</GroupLabel>
          <Tool label="Screenshot" w="w-[176px]" icon={<CameraIcon />} />
          <Tool label="Record" w="w-[78px]" off beta="-right-[11px]" icon={<RecordIcon />} />
          <Divider className="ml-[31px]" />
          <GroupLabel className="ml-[39px] w-[86px]">RESULT</GroupLabel>
          <Tool label="Reset" w="w-[142px]" icon={<ResetIcon />} />
          <Tool label="Import view" w="w-[118px]" off icon={<ImportIcon />} />
          <Tool label="Download" w="w-[172px]" off icon={<DownloadIcon />} />
          <Tool label="Share" w="w-[72px]" icon={<Share2 size={38} color={B} strokeWidth={1.5} />} />
        </div>

        <main className="relative flex flex-1 items-start pt-[21px] pl-[20px]">
          <MeshView />
          <ViewCubes />
          <Legend />
          <OrientationGizmo />

          <div className="relative flex w-[614px] shrink-0 flex-col gap-[13px]">
            <TreePanel />
            <div className="flex h-[87px] items-center border-2 border-[#a3a3a3] bg-[#b2b2b2] pl-[27px] text-[35px] font-bold tracking-[-0.2px] text-[#2a2a2a]">Job status</div>
          </div>
          <div className="relative"><FiltersPanel /></div>
          <RightPanels />

          {/* splitters */}
          <div className="absolute top-[726px] left-[640px] flex gap-[7px]"><i className="h-[44px] w-[2px] bg-[#9a9a9a]" /><i className="h-[44px] w-[2px] bg-[#9a9a9a]" /></div>
          <div className="absolute top-[244px] left-[3195px] flex gap-[7px]"><i className="h-[40px] w-[2px] bg-[#9a9a9a]" /><i className="h-[40px] w-[2px] bg-[#9a9a9a]" /></div>

          {/* tooltip */}
          <div className="absolute -top-[5px] left-[206px] z-20 h-0 w-0 border-x-[12px] border-b-[14px] border-x-transparent border-b-[#bcbcbc]" />
          <div className="absolute top-[8px] left-[103px] z-20 flex h-[68px] w-[273px] items-center justify-center border-2 border-[#a3a3a3] bg-[#b2b2b2] text-[30px] text-[#2a2a2a] shadow-[0_4px_30px_rgba(0,0,0,0.08)]">Add cutting plane</div>

          {/* chat */}
          <div className="absolute top-[910px] left-[3650px] flex h-[120px] w-[120px] items-center justify-center rounded-full bg-[#2f5277] shadow-[0_4px_30px_rgba(0,0,0,0.15)]">
            <svg width="54" height="62" viewBox="0 0 54 62">
              <path d="M6 0H48a6 6 0 0 1 6 6V62L40 55H6a6 6 0 0 1-6-6V6a6 6 0 0 1 6-6z" fill="#b2b2b2" />
              <path d="M9 38c10 6 26 6 36 0" fill="none" stroke="#2f5277" strokeWidth="3" strokeLinecap="round" />
            </svg>
          </div>
        </main>
      </div>

      {/* floating widgets that sit past the window edge */}
      <div className="absolute top-[538px] left-[3768px] flex h-[61px] w-[60px] items-center justify-center rounded-full bg-[#5b7ab5] text-[19px] font-bold text-[#b9c3d6] [font-family:'Liberation_Sans',sans-serif]">645M</div>
      <div className="absolute top-[936px] left-[3745px] flex h-[86px] w-[89px] items-center rounded-l-full bg-[#d8a9be] pl-[22px] text-[#f3e6ec]">
        <span className="relative block h-[50px] w-[50px] [font-family:'Noto_Sans_CJK_SC',sans-serif]">
          <span className="absolute top-0 left-0 text-[28px] leading-[28px]">中</span>
          <span className="absolute right-0 bottom-0 text-[32px] leading-[32px] font-semibold">A</span>
        </span>
      </div>
    </div>
  )
}
